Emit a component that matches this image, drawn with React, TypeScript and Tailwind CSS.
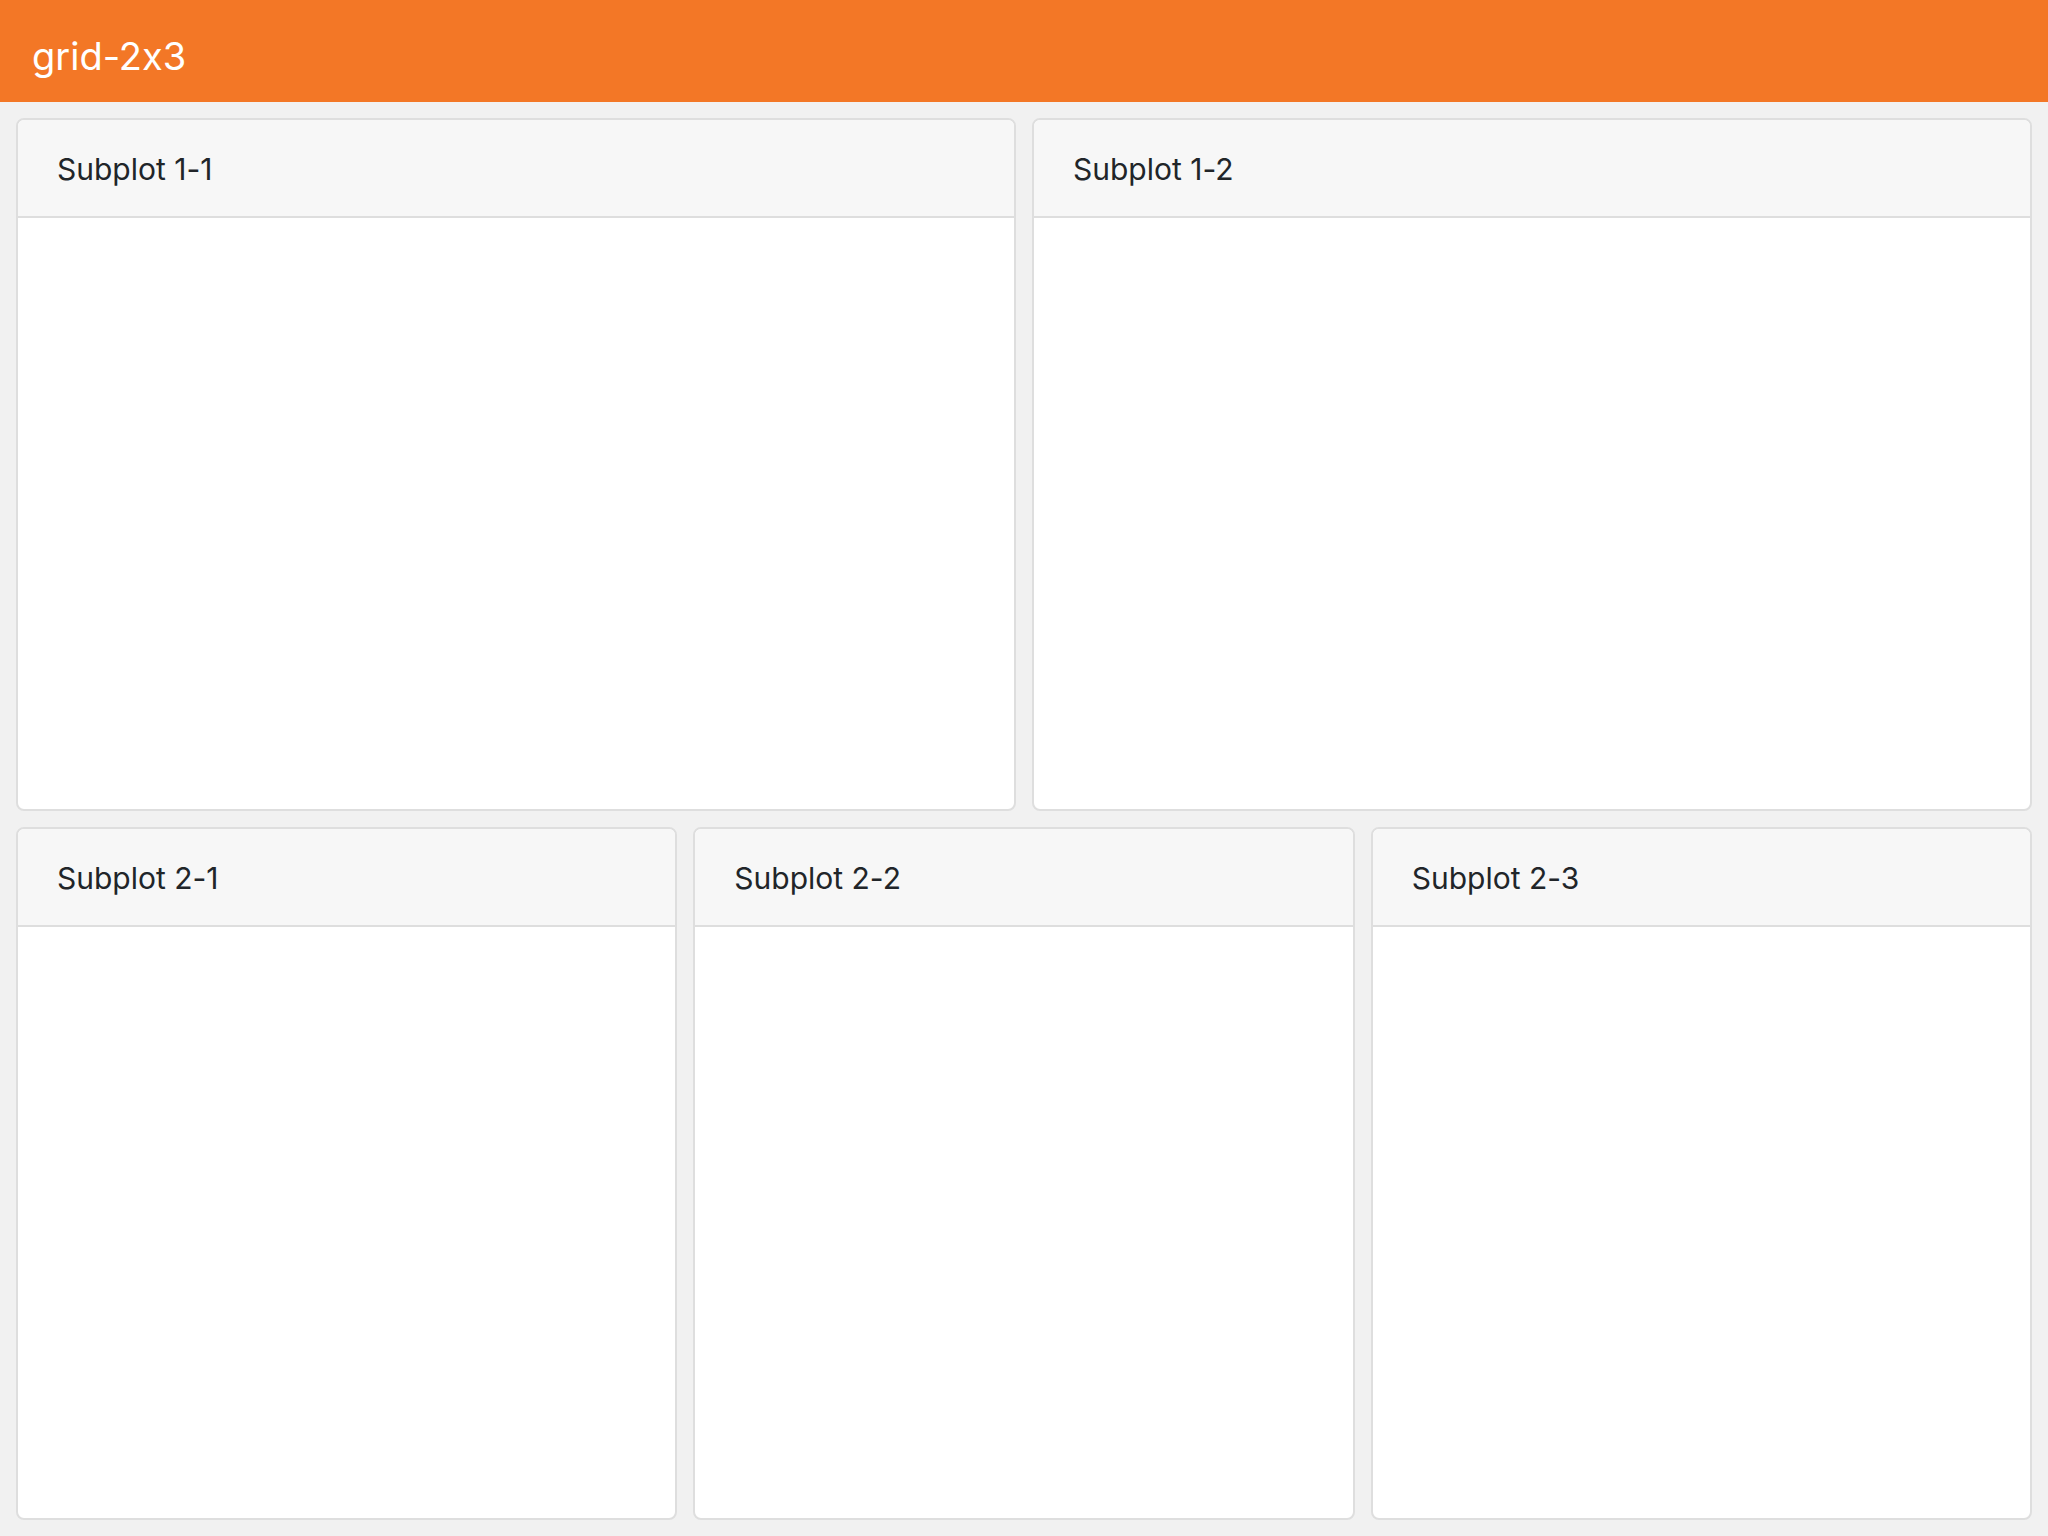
const rows = [
  ["Subplot 1-1", "Subplot 1-2"],
  ["Subplot 2-1", "Subplot 2-2", "Subplot 2-3"],
];

function Card({ title }: { title: string }) {
  return (
    <div className="flex min-w-0 flex-1 flex-col overflow-hidden rounded-[8px] border-2 border-[#dedede] bg-white">
      <div className="border-b-2 border-[#dedede] bg-[#f7f7f7] px-[39px] pt-[25px] pb-[23px] text-[30px] leading-[48px] text-[#212529]">
        {title}
      </div>
      <div className="flex-1" />
    </div>
  );
}

export default function App() {
  return (
    <div
      className="flex h-[1536px] w-[2048px] flex-col bg-[#f1f1f1] [font-feature-settings:'calt'_0]"
      style={{ fontFamily: "Inter, 'Noto Sans', sans-serif" }}
    >
      <header className="flex h-[102px] shrink-0 items-center bg-[#f37726] px-[32px] pt-[10px]">
        <span className="text-[38px] leading-none text-white">grid-2x3</span>
      </header>
      <main className="flex flex-1 flex-col gap-4 p-4">
        {rows.map((row, i) => (
          <div key={i} className="flex flex-1 gap-4">
            {row.map((t) => (
              <Card key={t} title={t} />
            ))}
          </div>
        ))}
      </main>
    </div>
  );
}
